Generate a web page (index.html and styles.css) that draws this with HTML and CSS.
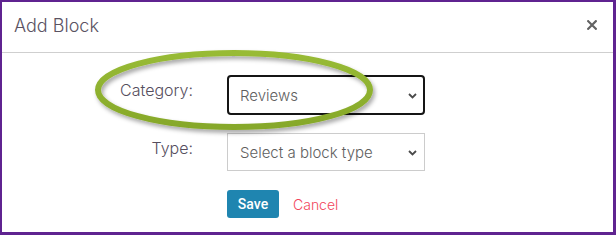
FILE: index.html
```html
<!DOCTYPE html>
<html lang="en">
<head>
<meta charset="utf-8">
<title>Add Block</title>
<link rel="stylesheet" href="styles.css">
</head>
<body>
<div class="modal">
  <div class="modal-header">
    <h1 class="modal-title">Add Block</h1>
    <button class="close" type="button" aria-label="Close">
      <svg width="10" height="10" viewBox="0 0 10 10"><path d="M1.2 1.2L8.8 8.8M8.8 1.2L1.2 8.8" stroke="#626262" stroke-width="2.2" stroke-linecap="square"/></svg>
    </button>
  </div>
  <div class="modal-body">
    <form class="form">
      <label class="label" for="cat">Category:</label>
      <div class="select-wrap">
        <select id="cat" class="select select-focus"><option>Reviews</option></select>
        <svg class="chev" width="9" height="6" viewBox="0 0 9 6"><path d="M1 1L4.5 4.5L8 1" fill="none" stroke="#4a4a4a" stroke-width="1.8"/></svg>
      </div>
      <label class="label" for="type">Type:</label>
      <div class="select-wrap">
        <select id="type" class="select"><option>Select a block type</option></select>
        <svg class="chev" width="9" height="6" viewBox="0 0 9 6"><path d="M1 1L4.5 4.5L8 1" fill="none" stroke="#4a4a4a" stroke-width="1.8"/></svg>
      </div>
      <div class="actions">
        <button class="btn-save" type="button">Save</button>
        <a class="cancel" href="#">Cancel</a>
      </div>
    </form>
  </div>
</div>
<svg class="annotation" width="616" height="235" viewBox="0 0 616 235">
  <defs>
    <linearGradient id="g" x1="0" y1="0" x2="0" y2="1">
      <stop offset="0" stop-color="#98bb36"/>
      <stop offset="1" stop-color="#86a829"/>
    </linearGradient>
    <filter id="sh" x="-10%" y="-20%" width="120%" height="150%">
      <feDropShadow dx="2" dy="3" stdDeviation="2" flood-color="#000" flood-opacity="0.35"/>
    </filter>
  </defs>
  <ellipse cx="234" cy="90" rx="136" ry="37" fill="none" stroke="url(#g)" stroke-width="6" filter="url(#sh)"/>
</svg>
</body>
</html>
```
FILE: styles.css
```css
* { box-sizing: border-box; }
html, body { margin: 0; padding: 0; background: #fff; }
body {
  position: relative;
  width: 616px;
  height: 235px;
  font-family: Inter, "Noto Sans", sans-serif;
}
.modal {
  width: 616px;
  height: 235px;
  border: 2px solid #5f2390;
  border-right-width: 3px;
  border-bottom-width: 3px;
  background: #fff;
}
.modal-header {
  height: 51px;
  display: flex;
  align-items: center;
  justify-content: space-between;
  padding: 0 16px 2px 12px;
  border-bottom: 1px solid #cfcfcf;
}
.modal-title {
  margin: 0;
  font-size: 18px;
  font-weight: 300;
  color: #5a5262;
  line-height: 22px;
}
.close {
  border: 0;
  background: none;
  padding: 0;
  width: 10px;
  height: 10px;
  display: block;
  margin-top: -3px;
}
.close svg { display: block; }
.modal-body { padding-top: 22px; }
.form {
  display: grid;
  grid-template-columns: 191px 198px;
  column-gap: 34px;
  row-gap: 18px;
}
.label {
  text-align: right;
  font-size: 16px;
  font-weight: 300;
  line-height: 24px;
  padding-top: 3px;
  color: #564e5e;
  align-self: start;
}
.select-wrap { position: relative; }
.select {
  appearance: none;
  -webkit-appearance: none;
  width: 198px;
  height: 38px;
  border: 1px solid #cccccc;
  border-radius: 0;
  background: #fff;
  padding: 0 24px 0 12px;
  font-family: Inter, "Noto Sans", sans-serif;
  font-size: 15px;
  font-weight: 300;
  color: #5e5e5e;
  display: block;
  outline: none;
}
.select-focus {
  height: 40px;
  border: 2px solid #151515;
  border-radius: 4px;
  padding-left: 11px;
}
.chev {
  position: absolute;
  right: 8px;
  top: 50%;
  margin-top: -2px;
}
.actions {
  grid-column: 2;
  display: flex;
  align-items: center;
  gap: 14px;
  margin-top: 1px;
}
.btn-save {
  width: 52px;
  height: 28px;
  border: 0;
  border-radius: 3px;
  background: #1f85b0;
  color: #fff;
  font-family: Roboto, "Liberation Sans", sans-serif;
  font-weight: 500;
  font-size: 14px;
  padding: 0;
}
.cancel {
  color: #f2465b;
  font-size: 14px;
  font-weight: 300;
  text-decoration: none;
}
.annotation {
  position: absolute;
  left: 0;
  top: 0;
  pointer-events: none;
}
```
